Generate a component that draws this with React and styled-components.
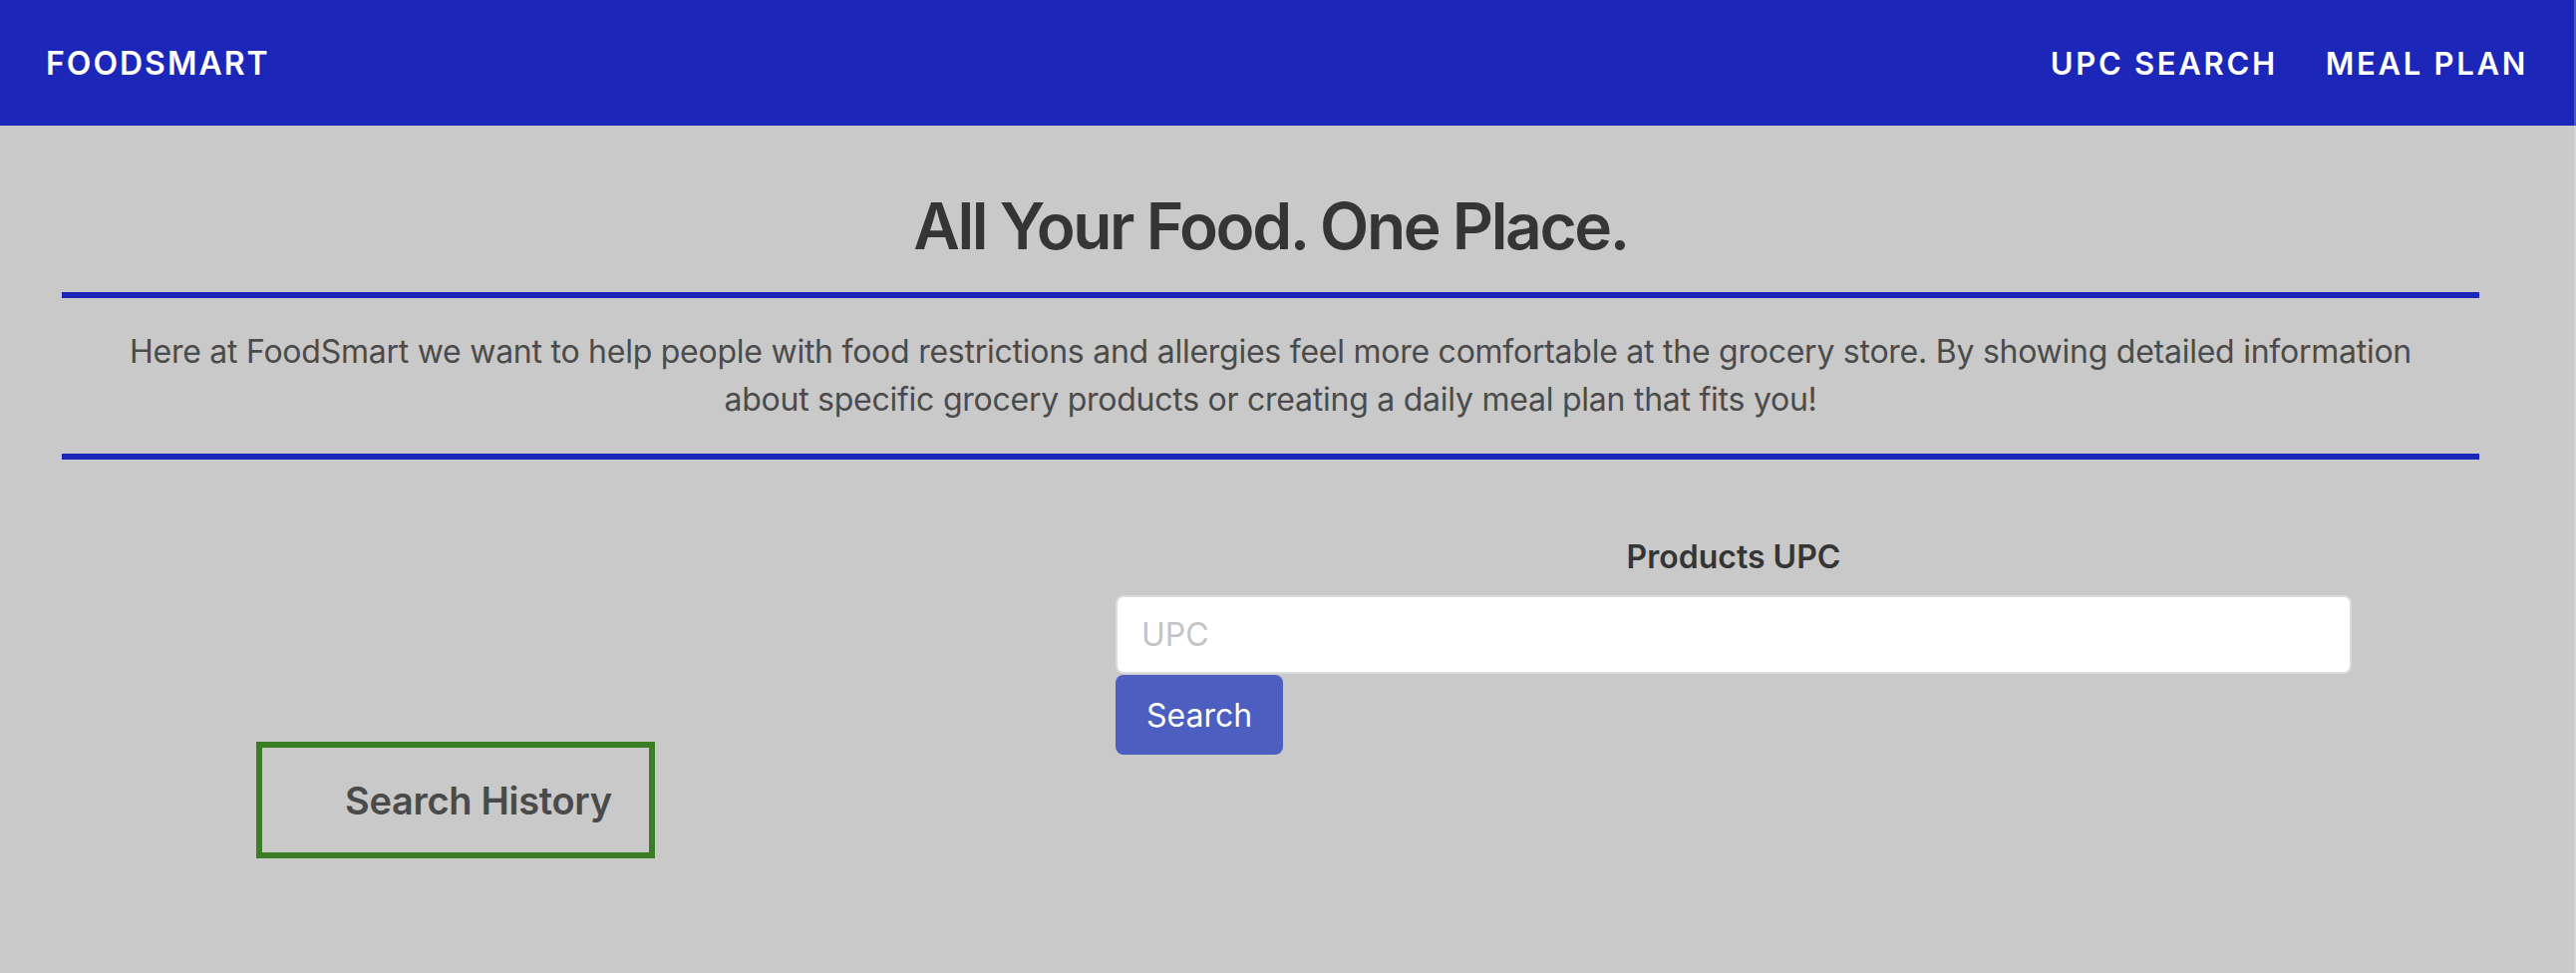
import React from "react";
import styled, { createGlobalStyle } from "styled-components";

const Global = createGlobalStyle`
  html, body { margin: 0; padding: 0; }
  body {
    background: #c8c9c8;
    font-family: "Inter", "Liberation Sans", sans-serif;
    min-height: 976px;
  }
  body::after {
    content: "";
    position: fixed;
    top: 0;
    right: 0;
    width: 2px;
    height: 100%;
    background: rgba(255, 255, 255, 0.22);
  }
`;

const Nav = styled.nav`
  height: 126px;
  background: #1c27b9;
  display: flex;
  align-items: center;
  justify-content: space-between;
  padding: 0 48px 0 46px;
  box-sizing: border-box;
`;

const Brand = styled.a`
  color: #fff;
  font-size: 32px;
  font-weight: 600;
  letter-spacing: 2px;
  text-decoration: none;
`;

const Links = styled.div`
  display: flex;
  gap: 48px;
`;

const NavLink = styled.a`
  color: #fff;
  font-size: 31px;
  font-weight: 600;
  letter-spacing: 2.7px;
  text-decoration: none;
`;

const Main = styled.main`
  margin-left: 62px;
  width: 2425px;
`;

const Title = styled.h1`
  margin: 62px 0 0;
  text-align: center;
  color: #353535;
  font-size: 64px;
  font-weight: 600;
  line-height: 77px;
  letter-spacing: -2.4px;
`;

const Rule = styled.hr`
  margin: ${(p) => p.$mt || 0}px 0 0;
  border: 0;
  height: 6px;
  background: #1c27b9;
`;

const Intro = styled.p`
  margin: 0;
  padding: 30px 56px;
  text-align: center;
  color: #4b4b4b;
  font-size: 32px;
  line-height: 48px;
  letter-spacing: -0.25px;
`;

const Section = styled.section`
  display: grid;
  grid-template-columns: 790px 1240px;
  column-gap: 267px;
  margin-top: 78px;
  align-items: start;
`;

const HistoryCol = styled.div`
  display: flex;
  justify-content: center;
  padding-top: 205px;
`;

const HistoryBox = styled.div`
  width: 400px;
  height: 117px;
  box-sizing: border-box;
  border: 6px solid #3a7d22;
  display: flex;
  align-items: center;
  padding-left: 83px;
  color: #4a4a4a;
  font-size: 38px;
  font-weight: 600;
  letter-spacing: -0.3px;
`;

const Form = styled.form`
  display: flex;
  flex-direction: column;
  align-items: flex-start;
`;

const Label = styled.label`
  align-self: stretch;
  text-align: center;
  color: #353535;
  font-size: 32px;
  font-weight: 600;
  line-height: 39px;
  margin-bottom: 19px;
`;

const Input = styled.input`
  width: 100%;
  height: 79px;
  box-sizing: border-box;
  border: 2px solid #dcdcdc;
  border-radius: 8px;
  background: #fff;
  padding: 0 24px;
  font-family: inherit;
  font-size: 32px;
  color: #333;
  outline: none;
  &::placeholder { color: #c4c4c4; }
`;

const Button = styled.button`
  margin-top: 1px;
  width: 168px;
  height: 80px;
  border: 0;
  border-radius: 8px;
  background: #4c5ec0;
  color: #fff;
  font-family: inherit;
  font-size: 32px;
  cursor: pointer;
`;

export default function App() {
  return (
    <>
      <Global />
      <Nav>
        <Brand href="#">FOODSMART</Brand>
        <Links>
          <NavLink href="#">UPC SEARCH</NavLink>
          <NavLink href="#">MEAL PLAN</NavLink>
        </Links>
      </Nav>
      <Main>
        <Title>All Your Food. One Place.</Title>
        <Rule $mt={28} />
        <Intro>
          Here at FoodSmart we want to help people with food restrictions and allergies feel more
          comfortable at the grocery store. By showing detailed information about specific grocery
          products or creating a daily meal plan that fits you!
        </Intro>
        <Rule />
        <Section>
          <HistoryCol>
            <HistoryBox>Search History</HistoryBox>
          </HistoryCol>
          <Form onSubmit={(e) => e.preventDefault()}>
            <Label htmlFor="upc">Products UPC</Label>
            <Input id="upc" placeholder="UPC" />
            <Button type="submit">Search</Button>
          </Form>
        </Section>
      </Main>
    </>
  );
}
